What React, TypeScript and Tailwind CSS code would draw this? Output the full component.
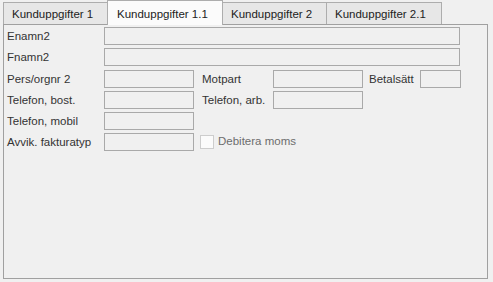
const font = { fontFamily: '"Liberation Sans", Arial, sans-serif' }

// Fält som är inaktiva (grå ram, samma bakgrund som panelen)
function Field({ w }: { w: string }) {
  return <div className={`h-[18px] shrink-0 border border-[#a9a9a9] bg-[#f0f0f0] ${w}`} />
}

function Label({ text, w }: { text: string; w: string }) {
  return <div className={`shrink-0 whitespace-nowrap leading-[18px] text-[#333] ${w}`}>{text}</div>
}

const tabs = ['Kunduppgifter 1', 'Kunduppgifter 1.1', 'Kunduppgifter 2', 'Kunduppgifter 2.1']
const tabWidths = ['w-[105px]', 'w-[116px]', 'w-[105px]', 'w-[116px]']

export default function App() {
  const active = 1

  return (
    <div className="w-[493px] h-[282px] bg-[#f0f0f0] text-[11.5px] overflow-hidden" style={font}>
      {/* Flikar */}
      <div className="flex items-end h-[24px] pl-[3px]">
        {tabs.map((t, i) => (
          <div
            key={t}
            className={
              i === active
                ? `relative z-10 -ml-px -mb-px h-[25px] ${tabWidths[i]} border border-b-0 border-[#adadad] bg-[#fbfbfb] pl-[9px] pt-[5px] text-[#222]`
                : `${i > 0 ? '-ml-px' : ''} h-[22px] ${tabWidths[i]} border border-b-0 border-[#adadad] bg-[#e7e7e7] pl-[8px] pt-[3px] text-[#222]`
            }
          >
            {t}
          </div>
        ))}
      </div>

      {/* Panel */}
      <div className="ml-[3px] w-[485px] h-[255px] border border-[#a0a0a0] pt-[2px] pl-[3px] flex flex-col gap-[3px]">
        <div className="flex">
          <Label text="Enamn2" w="w-[97px]" />
          <Field w="w-[356px]" />
        </div>
        <div className="flex">
          <Label text="Fnamn2" w="w-[97px]" />
          <Field w="w-[356px]" />
        </div>
        <div className="flex mt-px">
          <Label text="Pers/orgnr 2" w="w-[97px]" />
          <Field w="w-[90px]" />
          <Label text="Motpart" w="w-[79px] pl-[8px]" />
          <Field w="w-[90px]" />
          <Label text="Betalsätt" w="w-[57px] pl-[6px]" />
          <Field w="w-[41px]" />
        </div>
        <div className="flex">
          <Label text="Telefon, bost." w="w-[97px]" />
          <Field w="w-[90px]" />
          <Label text="Telefon, arb." w="w-[79px] pl-[8px]" />
          <Field w="w-[90px]" />
        </div>
        <div className="flex">
          <Label text="Telefon, mobil" w="w-[97px]" />
          <Field w="w-[90px]" />
        </div>
        <div className="flex items-center">
          <Label text="Avvik. fakturatyp" w="w-[97px]" />
          <Field w="w-[90px]" />
          <div className="ml-[6px] w-[14px] h-[14px] border border-[#cdcdcd] bg-[#fbfbfb] shrink-0" />
          <span className="ml-[4px] text-[#6d6d6d]">Debitera moms</span>
        </div>
      </div>
    </div>
  )
}
